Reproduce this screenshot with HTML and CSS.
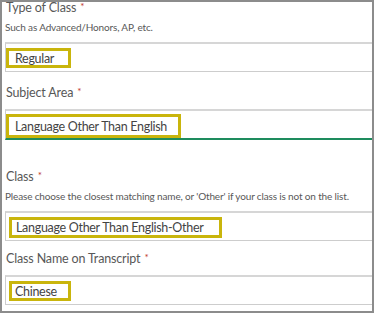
FILE: index.html
```html
<!DOCTYPE html>
<html>
<head>
    <meta charset="UTF-8">
    <title>Class Details</title>
    <link rel="stylesheet" href="styles.css">
</head>
<body>
    <div class="frame">
        <div class="field first">
            <div class="label">Type of Class <span class="req">*</span></div>
            <div class="help">Such as Advanced/Honors, AP, etc.</div>
            <div class="input">
                <span class="mark mark-regular">Regular</span>
            </div>
        </div>

        <div class="field">
            <div class="label">Subject Area <span class="req">*</span></div>
            <div class="input focused">
                <span class="mark mark-subject">Language Other Than English</span>
            </div>
        </div>

        <div class="field spaced">
            <div class="label">Class <span class="req">*</span></div>
            <div class="help">Please choose the closest matching name, or 'Other' if your class is not on the list.</div>
            <div class="input">
                <span class="mark mark-class">Language Other Than English-Other</span>
            </div>
        </div>

        <div class="field last">
            <div class="label">Class Name on Transcript <span class="req">*</span></div>
            <div class="input">
                <span class="mark mark-name">Chinese</span>
            </div>
        </div>
    </div>
</body>
</html>
```

FILE: styles.css
```css
body {
    margin: 0;
    font-family: 'Lato', 'Open Sans', sans-serif;
    color: #585858;
    background: #fff;
}
.frame {
    width: 374px;
    height: 313px;
    box-sizing: border-box;
    border: 2px solid #8c8c8c;
    padding: 0 0 0 3px;
    overflow: hidden;
}
.field {
    padding-top: 12px;
}
.field.first {
    padding-top: 0;
    margin-top: -3px;
}
.field.spaced {
    padding-top: 28px;
}
.field.last {
    padding-top: 9px;
}
.label {
    height: 18px;
    font-size: 12.5px;
    letter-spacing: -0.15px;
    line-height: 18px;
    padding-left: 1px;
    margin-bottom: 7px;
}
.req {
    color: #c0392b;
    font-size: 10px;
    line-height: 0;
    vertical-align: 2px;
    margin-left: 1px;
}
.help {
    height: 14px;
    font-size: 10px;
    letter-spacing: -0.15px;
    line-height: 14px;
    margin-top: -4px;
    margin-bottom: 8px;
    white-space: nowrap;
}
.input {
    height: 30px;
    box-sizing: border-box;
    margin-right: -20px;
    border: 1px solid #cdcdcd;
    border-top: 2px solid #d6d6d6;
    display: flex;
    align-items: flex-start;
}
.input.focused {
    height: 31px;
    border-bottom: 2px solid #1e8c5e;
}
.mark {
    display: flex;
    align-items: center;
    box-sizing: border-box;
    border: 3px solid #c9b50c;
    font-size: 12.5px;
    letter-spacing: -0.3px;
    color: #444;
    padding-left: 6px;
    white-space: nowrap;
}
.mark-regular {
    width: 65px;
    height: 20px;
    margin-top: 4px;
}
.mark-subject {
    width: 175px;
    height: 24px;
    margin-top: 3px;
}
.mark-class {
    width: 213px;
    height: 21px;
    margin-left: 3px;
    padding-left: 4px;
    margin-top: 4px;
}
.mark-name {
    width: 62px;
    height: 20px;
    margin-left: 3px;
    padding-left: 3px;
    margin-top: 4px;
}
```
